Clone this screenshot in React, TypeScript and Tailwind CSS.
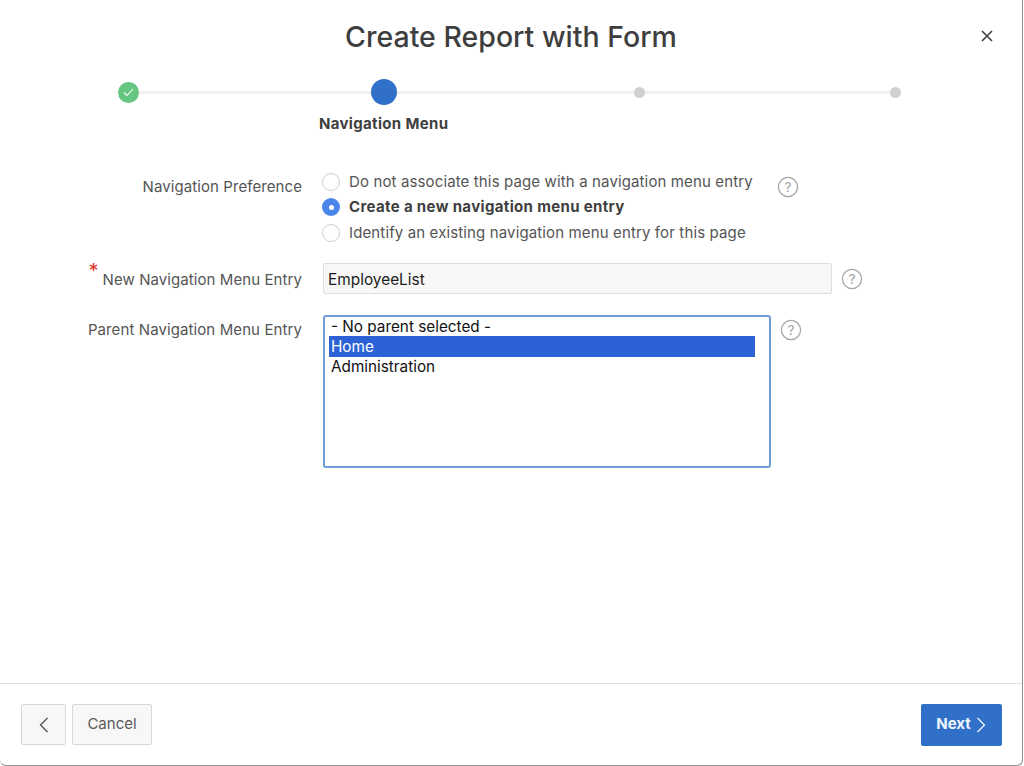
import React from "react";

function Help() {
  return (
    <svg width="22" height="22" viewBox="0 0 22 22" className="shrink-0">
      <circle cx="11" cy="11" r="9.6" fill="none" stroke="#a8a8a8" strokeWidth="1.3" />
      <text x="11" y="15.5" textAnchor="middle" fontSize="13" fill="#9a9a9a" fontFamily="Inter, sans-serif">?</text>
    </svg>
  );
}

function Radio({ label, checked }: { label: string; checked?: boolean }) {
  return (
    <div className="flex items-center h-[25.5px]">
      {checked ? (
        <span className="w-[18px] h-[18px] rounded-full bg-[#4a86ea] flex items-center justify-center shrink-0">
          <span className="w-[5px] h-[5px] rounded-full bg-white" />
        </span>
      ) : (
        <span className="w-[18px] h-[18px] rounded-full border border-[#cfcfcf] bg-white shrink-0" />
      )}
      <span className={checked ? "ml-[9px] text-[15px] font-bold tracking-[0.35px] text-[#3f3f3f]" : "ml-[9px] text-[15px] tracking-[0.13px] text-[#555555]"}>{label}</span>
    </div>
  );
}

export default function App() {
  return (
    <div className="w-[1024px] h-[766px] bg-white font-['Inter',sans-serif] overflow-hidden">
      <div className="w-[1023px] h-[766px] flex flex-col border-r border-b border-[#8f8f8f] rounded-br-md rounded-bl-md">
        <div className="relative h-[74px] flex items-center justify-center shrink-0">
          <h1 className="text-[28.5px] font-medium text-[#3e3e3e]">Create Report with Form</h1>
          <svg width="14" height="14" viewBox="0 0 14 14" className="absolute left-[980px] top-[28.5px]">
            <path d="M2 2 L12 12 M12 2 L2 12" stroke="#404040" strokeWidth="1.6" fill="none" />
          </svg>
        </div>

        <div className="flex items-center h-[36px] pl-[118px] shrink-0">
          <span className="w-[21px] h-[21px] rounded-full bg-[#65c682] flex items-center justify-center shrink-0">
            <svg width="11" height="9" viewBox="0 0 11 9">
              <path d="M1 4.5 L4 7.5 L10 1" stroke="#ffffff" strokeWidth="1.1" fill="none" />
            </svg>
          </span>
          <span className="w-[232px] h-[3px] bg-[#f0f0f0]" />
          <span className="w-[26px] h-[26px] rounded-full bg-[#3170c8] shrink-0" />
          <span className="w-[237px] h-[3px] bg-[#f0f0f0]" />
          <span className="w-[11px] h-[11px] rounded-full bg-[#d0d0d0] shrink-0" />
          <span className="w-[245px] h-[3px] bg-[#f0f0f0]" />
          <span className="w-[11px] h-[11px] rounded-full bg-[#d0d0d0] shrink-0" />
        </div>

        <div className="pl-[319px] mt-[3px] h-[22px] leading-[22px] text-[15px] font-bold tracking-[0.33px] text-[#404040] shrink-0">Navigation Menu</div>

        <div className="flex flex-col flex-1 pt-[34px]">
          <div className="flex items-start">
            <div className="w-[302px] text-right text-[15px] tracking-[0.08px] text-[#555555] pt-[7px] leading-[22px] shrink-0">Navigation Preference</div>
            <div className="ml-[20px] flex flex-col">
              <Radio label="Do not associate this page with a navigation menu entry" />
              <Radio checked label="Create a new navigation menu entry" />
              <Radio label="Identify an existing navigation menu entry for this page" />
            </div>
            <div className="ml-[24px] mt-[7px]"><Help /></div>
          </div>

          <div className="flex items-center mt-[17px]">
            <div className="w-[302px] text-right text-[15px] tracking-[0.08px] text-[#555555] leading-[22px] shrink-0 pt-[4px]">
              <span className="relative">
                <span className="absolute -left-[14px] -top-[10px] text-[20px] text-[#dd3b30]">*</span>
                New Navigation Menu Entry
              </span>
            </div>
            <div className="ml-[21px] w-[509px] h-[31px] bg-[#f7f7f7] border border-[#dedede] rounded-[2px] pl-[4px] text-[15.4px] leading-[31px] text-[#1c1c1c]">EmployeeList</div>
            <div className="ml-[9px] mt-[1px]"><Help /></div>
          </div>

          <div className="flex items-start mt-[21px]">
            <div className="w-[302px] text-right text-[15px] tracking-[0.1px] text-[#555555] pt-[4px] leading-[22px] shrink-0">Parent Navigation Menu Entry</div>
            <div className="ml-[21px] w-[448px] h-[153px] border-2 border-[#6f9dd6] rounded-[3px] pl-[4px] pr-[14px] text-[15.3px] text-[#111111]">
              <div className="h-[19px] leading-[19px] pl-[2px]">- No parent selected -</div>
              <div className="h-[21px] leading-[21px] pl-[2px] bg-[#2c62d6] text-white">Home</div>
              <div className="h-[20px] leading-[20px] pl-[2px]">Administration</div>
            </div>
            <div className="ml-[9px] mt-[4px]"><Help /></div>
          </div>
        </div>

        <div className="h-[82px] border-t border-[#e0e0e0] flex items-center pl-[21px] pr-[20px] shrink-0">
          <button className="w-[45px] h-[41px] bg-[#f7f7f7] border border-[#d8d8d8] rounded-[2px] flex items-center justify-center">
            <svg width="10" height="16" viewBox="0 0 10 16">
              <path d="M8.5 1 L1.5 8 L8.5 15" stroke="#555555" strokeWidth="1.4" fill="none" />
            </svg>
          </button>
          <button className="ml-[6px] w-[80px] h-[41px] bg-[#f7f7f7] border border-[#d8d8d8] rounded-[2px] text-[15px] text-[#5a5a5a]">Cancel</button>
          <button className="ml-auto w-[81px] h-[42px] bg-[#3170c8] rounded-[2px] flex items-center justify-center gap-[5px] pr-[1px] text-[15px] font-bold text-[#eef4fc]">
            Next
            <svg width="10" height="16" viewBox="0 0 10 16">
              <path d="M1.5 1 L8.5 8 L1.5 15" stroke="#eef4fc" strokeWidth="1.3" fill="none" />
            </svg>
          </button>
        </div>
      </div>
    </div>
  );
}
